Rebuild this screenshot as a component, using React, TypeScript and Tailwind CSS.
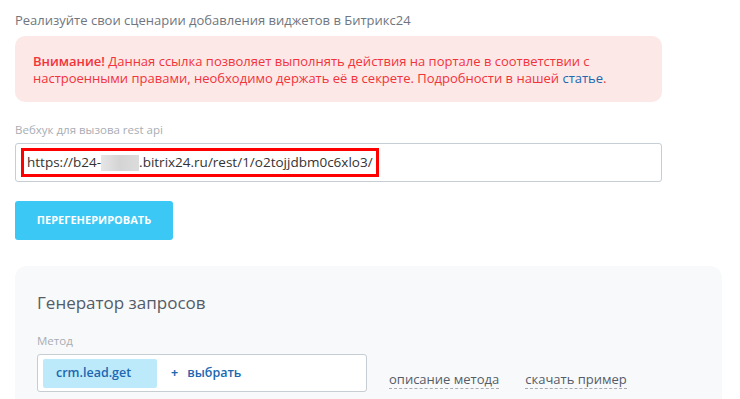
import React from 'react';

const font = { fontFamily: '"Open Sans", "Noto Sans", sans-serif' };

export default function App() {
  return (
    <div style={font} className="h-[399px] w-[740px] overflow-hidden bg-white pl-[15px] pt-[11px]">
      <p className="text-[13px] leading-[18px] text-[#6f7680]">
        Реализуйте свои сценарии добавления виджетов в Битрикс24
      </p>

      <div className="mt-[7px] h-[66px] w-[647px] rounded-[10px] bg-[#fde8e8] px-[18px] pt-[17px] text-[13px] leading-[17px] text-[#f2333a]">
        <b className="font-semibold">Внимание!</b> Данная ссылка позволяет выполнять действия на портале в
        соответствии с настроенными правами, необходимо держать её в секрете. Подробности в нашей{' '}
        <a className="text-[#2067b0]">статье</a>.
      </div>

      <label className="mt-[20px] block text-[11.5px] leading-[16px] text-[#a8adb4]">Вебхук для вызова rest api</label>
      <div className="mt-[5px] flex h-[39px] w-[647px] items-center rounded-[3px] border border-[#c6cdd3] bg-white pl-[5px]">
        <div className="flex h-[29px] items-center border-[3px] border-[#ff0000] pl-[3px] pr-[3px] text-[13.5px] text-[#333]">
          https://b24-
          <span className="inline-block h-[16px] w-[38px] bg-gradient-to-r from-[#e6e6e6] via-[#d4d4d4] to-[#dcdcdc]" />
          .bitrix24.ru/rest/1/o2tojjdbm0c6xlo3/
        </div>
      </div>

      <button className="mt-[19px] h-[39px] w-[158px] rounded-[3px] bg-[#3bc8f5] text-[11px] font-bold text-white">
        ПЕРЕГЕНЕРИРОВАТЬ
      </button>

      <div className="mt-[26px] h-[140px] w-[707px] rounded-t-[12px] bg-[#f8f9fa] pl-[22px] pt-[25px]">
        <h2 className="text-[17px] leading-[24px] text-[#535c69]">Генератор запросов</h2>
        <div className="mt-[18px] text-[11.5px] leading-[16px] text-[#a8adb4]">Метод</div>
        <div className="mt-[5px] flex items-end">
          <div className="flex h-[38px] w-[330px] shrink-0 items-center rounded-[3px] border border-[#c6cdd3] bg-white pl-[5px]">
            <span className="flex h-[29px] w-[114px] items-center rounded-[2px] bg-[#bdeafb] pl-[13px] text-[12.5px] font-semibold text-[#2067b0]">
              crm.lead.get
            </span>
            <span className="ml-[14px] text-[12.5px] font-semibold text-[#2067b0]">
              <span className="mr-[9px] font-bold">+</span>выбрать
            </span>
          </div>
          <a className="mb-[3px] ml-[22px] whitespace-nowrap border-b border-dashed border-[#a8adb4] text-[13px] leading-[17px] text-[#535c69]">
            описание метода
          </a>
          <a className="mb-[3px] ml-[26px] whitespace-nowrap border-b border-dashed border-[#a8adb4] text-[13px] leading-[17px] text-[#535c69]">
            скачать пример
          </a>
        </div>
      </div>
    </div>
  );
}
